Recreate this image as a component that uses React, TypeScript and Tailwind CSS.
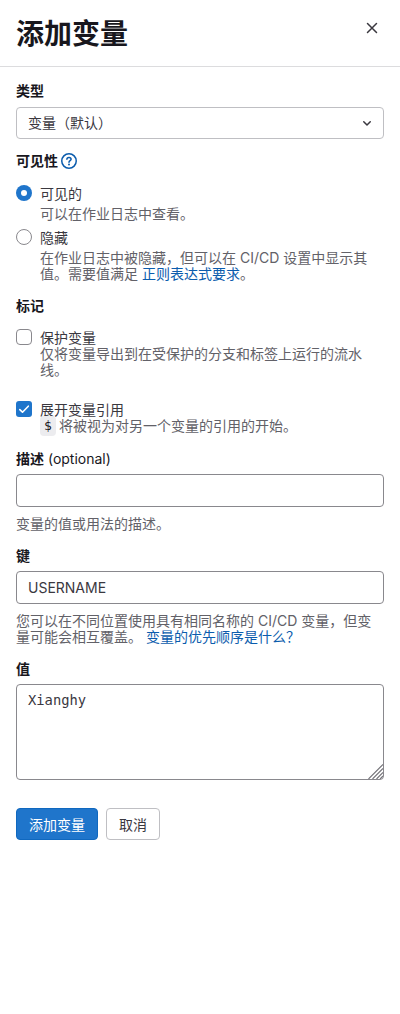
import type { ReactNode } from "react";

const CloseIcon = () => (
  <svg width="16" height="16" viewBox="0 0 16 16" fill="none" stroke="#3a383f" strokeWidth="1.5" strokeLinecap="round">
    <path d="M3.5 3.5l9 9M12.5 3.5l-9 9" />
  </svg>
);

const ChevronIcon = () => (
  <svg width="16" height="16" viewBox="0 0 16 16" fill="none" stroke="#3a383f" strokeWidth="1.5" strokeLinecap="round" strokeLinejoin="round">
    <path d="M4.75 6.75L8 10l3.25-3.25" />
  </svg>
);

const HelpIcon = () => (
  <svg width="16" height="16" viewBox="0 0 16 16" fill="none" stroke="#0b5cad" strokeWidth="1.5">
    <circle cx="8" cy="8" r="7.25" />
    <path d="M5.9 6.3c0-1.1 1-1.8 2.1-1.8s2.1.7 2.1 1.8c0 1.3-2.1 1.5-2.1 3" strokeLinecap="round" />
    <circle cx="8" cy="11.5" r="1" fill="#0b5cad" stroke="none" />
  </svg>
);

const CheckIcon = () => (
  <svg width="16" height="16" viewBox="0 0 16 16" fill="none" stroke="#fff" strokeWidth="1.6" strokeLinecap="round" strokeLinejoin="round">
    <path d="M3.8 8.6l2.7 2.6 5.8-6" />
  </svg>
);

const ResizeGrip = () => (
  <svg className="absolute right-0 bottom-0" width="15" height="15" viewBox="0 0 15 15" stroke="#737278" strokeWidth="1.1">
    <path d="M0.5 15L15 0.5M4.5 15L15 4.5M8.5 15L15 8.5M12 15l3-3" />
  </svg>
);

const Label = ({ children }: { children: ReactNode }) => (
  <div className="flex h-4 items-center font-bold whitespace-pre text-[#18171d]">{children}</div>
);

type OptionProps = {
  control: ReactNode;
  label: string;
  gap?: string;
  children: ReactNode;
};

const Option = ({ control, label, gap = "", children }: OptionProps) => (
  <div className="flex gap-2">
    {control}
    <div className="flex-1 pt-px">
      <div className={gap}>{label}</div>
      <div className="text-[#626168]">{children}</div>
    </div>
  </div>
);

const Link = ({ children }: { children: ReactNode }) => (
  <a className="text-[#0b5cad]">{children}</a>
);

const App = () => {
  return (
    <div className="h-[1014px] w-[400px] bg-white font-['Inter','Noto_Sans_CJK_SC',sans-serif] text-sm leading-4 text-[#3a383f]">
      <header className="flex h-[67px] justify-between border-b border-[#dcdcde] pr-5 pl-4">
        <h2 className="pt-[17px] text-[28px] leading-[35px] font-bold text-[#18171d]">添加变量</h2>
        <button className="mt-5 h-4">
          <CloseIcon />
        </button>
      </header>

      <main className="px-4 pt-4">
        <Label>类型</Label>
        <div className="mt-2 flex h-8 items-center justify-between rounded border border-[#bfbfc3] pr-2 pl-[11px]">
          <span>变量（默认）</span>
          <ChevronIcon />
        </div>

        <div className="mt-3.5 flex gap-[3px]">
          <Label>可见性</Label>
          <HelpIcon />
        </div>
        <div className="mt-4 flex flex-col gap-[7px]">
          <Option
            label="可见的"
            gap="mb-1"
            control={
              <span className="flex size-4 items-center justify-center rounded-full bg-[#1f75cb]">
                <span className="size-1.5 rounded-full bg-white" />
              </span>
            }
          >
            可以在作业日志中查看。
          </Option>
          <Option
            label="隐藏"
            gap="mb-1"
            control={<span className="size-4 rounded-full border border-[#89888d]" />}
          >
            在作业日志中被隐藏，但可以在 CI/CD 设置中显示其值。需要值满足 <Link>正则表达式要求</Link>。
          </Option>
        </div>

        <div className="mt-4">
          <Label>标记</Label>
        </div>
        <div className="mt-[15px] flex flex-col gap-[23px]">
          <Option label="保护变量" control={<span className="size-4 rounded-[4px] border border-[#89888d]" />}>
            仅将变量导出到在受保护的分支和标签上运行的流水线。
          </Option>
          <Option
            label="展开变量引用"
            control={
              <span className="size-4 rounded-[3px] bg-[#1f75cb]">
                <CheckIcon />
              </span>
            }
          >
            <div className="flex h-4 items-center gap-[3px]">
              <code className="flex h-5 w-4 items-center justify-center rounded bg-[#ececef] font-['DejaVu_Sans_Mono',monospace] text-[13px] text-[#18171d]">
                $
              </code>
              <span>将被视为对另一个变量的引用的开始。</span>
            </div>
          </Option>
        </div>

        <div className="mt-[17px]">
          <Label>
            描述<span className="font-normal"> (optional)</span>
          </Label>
        </div>
        <div className="mt-[7px] h-[33px] rounded border border-[#89888d]" />
        <p className="mt-[9px] text-[#626168]">变量的值或用法的描述。</p>

        <div className="mt-4">
          <Label>键</Label>
        </div>
        <div className="mt-[7px] flex h-[33px] items-center rounded border border-[#89888d] px-[11px]">USERNAME</div>
        <p className="mt-[9px] text-[#626168]">
          您可以在不同位置使用具有相同名称的 CI/CD 变量，但变量可能会相互覆盖。 <Link>变量的优先顺序是什么？</Link>
        </p>

        <div className="mt-4">
          <Label>值</Label>
        </div>
        <div className="relative mt-[7px] h-24 rounded border border-[#89888d] px-[11px] py-[7px] font-['DejaVu_Sans_Mono',monospace] text-[13.8px]">
          Xianghy
          <ResizeGrip />
        </div>

        <div className="mt-7 flex gap-2">
          <button className="h-8 w-[82px] rounded border border-[#1068bf] bg-[#1f75cb] pt-px text-white">添加变量</button>
          <button className="h-8 w-[54px] rounded border border-[#bfbfc3] pt-px">取消</button>
        </div>
      </main>
    </div>
  );
};

export default App;
